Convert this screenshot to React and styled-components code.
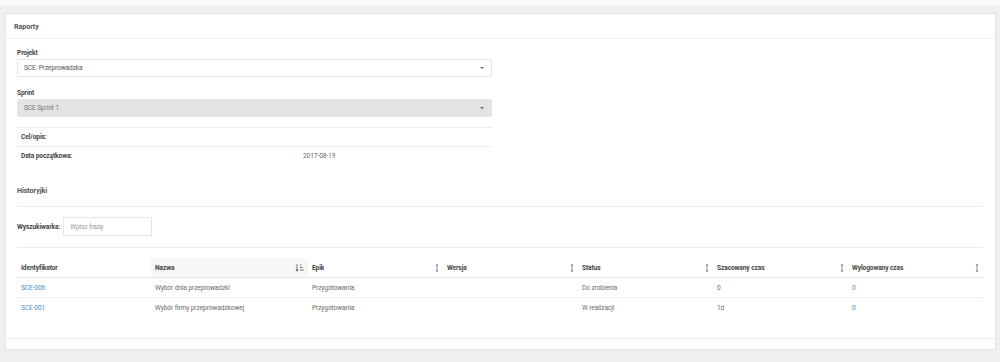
import React from 'react';
import styled, { createGlobalStyle } from 'styled-components';

const GlobalStyle = createGlobalStyle`
  body {
    margin: 0;
    background: #efefef;
    font-family: Roboto, "Liberation Sans", sans-serif;
    font-size: 6.6px;
    letter-spacing: -0.1px;
    color: #6a6a6a;
  }
`

const TopStrip = styled.div`
  height: 6px;
  background: #f8f8f8;
`

const Page = styled.div`
  padding: 7px 4px 13px 5px;
`

const Panel = styled.div`
  background: #fff;
  border: 1px solid #e4e4e4;
  border-top-color: #e0e2e4;
`

const PanelHeader = styled.div`
  height: 24px;
  display: flex;
  align-items: center;
  padding-left: 8px;
  border-bottom: 1px solid #eceef0;
  font-weight: 700;
  font-size: 7.2px;
  color: #555;
`

const PanelBody = styled.div`
  padding: 8px 12px 21px 11px;
`

const PanelFooter = styled.div`
  height: 10px;
  border-top: 1px solid #ececec;
`

const Narrow = styled.div`
  width: 475px;
`

const Label = styled.div`
  font-weight: 700;
  color: #444;
  height: 12px;
  line-height: 12px;
`

const SelectBox = styled.div`
  height: 18px;
  box-sizing: border-box;
  border: 1px solid #e6e6e6;
  border-radius: 2px;
  display: flex;
  align-items: center;
  justify-content: space-between;
  padding: 0 7px 0 6px;
  margin-bottom: 10px;
  background: ${p => (p.disabled ? '#e3e3e3' : '#fff')};
  color: ${p => (p.disabled ? '#777' : '#555')};
`

const Caret = styled.span`
  width: 0;
  height: 0;
  border-left: 2.5px solid transparent;
  border-right: 2.5px solid transparent;
  border-top: 2.5px solid #666;
`

const InfoTable = styled.div`
  border-top: 1px solid #ededed;
  margin-top: 8px;
`

const InfoRow = styled.div`
  display: grid;
  grid-template-columns: 282px 1fr;
  height: 18px;
  align-items: center;
  border-bottom: ${p => (p.last ? 'none' : '1px solid #ededed')};
  padding-left: 4px;
`

const InfoKey = styled.span`
  font-weight: 700;
  color: #444;
`

const SectionTitle = styled.div`
  margin-top: 21px;
  font-weight: 700;
  font-size: 7.2px;
  color: #555;
  padding-bottom: 11px;
  border-bottom: 1px solid #ececec;
`

const SearchRow = styled.div`
  display: flex;
  align-items: center;
  gap: 3px;
  padding: 10px 0 11px;
  border-bottom: 1px solid #ececec;
`

const SearchInput = styled.div`
  width: 89px;
  height: 19px;
  box-sizing: border-box;
  border: 1px solid #e6e6e6;
  display: flex;
  align-items: center;
  padding-left: 6px;
  color: #999;
`

const Table = styled.div`
  margin-top: 10px;
  display: grid;
  grid-template-columns: 134px 157px 135px 135px 135px 135px 135px;
`

const HeadCell = styled.div`
  height: 19px;
  display: flex;
  align-items: center;
  justify-content: space-between;
  padding: 0 4px;
  font-weight: 700;
  color: #444;
  border-bottom: 1px solid #e6e6e6;
  background: ${p => (p.sorted ? '#f7f7f7' : 'transparent')};
`

const Cell = styled.div`
  height: 19px;
  display: flex;
  align-items: center;
  padding: 0 4px;
  border-bottom: ${p => (p.last ? 'none' : '1px solid #efefef')};
  color: ${p => (p.link ? '#4a8fc8' : '#6a6a6a')};
`

const SortIcon = () => (
  <svg width="4" height="8" viewBox="0 0 4 8">
    <path d="M2 0.5 V7.5" stroke="#777" strokeWidth="0.8" />
    <path d="M0.5 1.5 L2 0 L3.5 1.5 Z M0.5 6.5 L2 8 L3.5 6.5 Z" fill="#777" />
  </svg>
)

const SortedIcon = () => (
  <svg width="9" height="8" viewBox="0 0 9 8">
    <path d="M2 0 V6.5" stroke="#666" strokeWidth="0.9" />
    <path d="M0.3 5.5 L2 7.8 L3.7 5.5 Z" fill="#666" />
    <path d="M5 1 H6.5 M5 3.5 H7.5 M5 6 H8.7" stroke="#666" strokeWidth="1" />
  </svg>
)

const columns = [
  { title: 'Identyfikator', sort: null, link: true },
  { title: 'Nazwa', sort: 'asc' },
  { title: 'Epik', sort: 'none' },
  { title: 'Wersja', sort: 'none' },
  { title: 'Status', sort: 'none' },
  { title: 'Szacowany czas', sort: 'none' },
  { title: 'Wylogowany czas', sort: 'none', link: true },
]

const rows = [
  ['SCE-006', 'Wybór dnia przeprowadzki', 'Przygotowania', '', 'Do zrobienia', '0', '0'],
  ['SCE-001', 'Wybór firmy przeprowadzkowej', 'Przygotowania', '', 'W realizacji', '1d', '0'],
]

export default function App() {
  return (
    <>
      <GlobalStyle />
      <TopStrip />
      <Page>
        <Panel>
          <PanelHeader>Raporty</PanelHeader>
          <PanelBody>
            <Narrow>
              <Label>Projekt</Label>
              <SelectBox>
                SCE: Przeprowadzka
                <Caret />
              </SelectBox>
              <Label>Sprint</Label>
              <SelectBox disabled>
                SCE Sprint 1
                <Caret />
              </SelectBox>
              <InfoTable>
                <InfoRow>
                  <InfoKey>Cel/opis:</InfoKey>
                  <span />
                </InfoRow>
                <InfoRow last>
                  <InfoKey>Data początkowa:</InfoKey>
                  <span>2017-08-19</span>
                </InfoRow>
              </InfoTable>
            </Narrow>
            <SectionTitle>Historyjki</SectionTitle>
            <SearchRow>
              <InfoKey>Wyszukiwarka:</InfoKey>
              <SearchInput>Wpisz frazę</SearchInput>
            </SearchRow>
            <Table>
              {columns.map(c => (
                <HeadCell key={c.title} sorted={c.sort === 'asc'}>
                  {c.title}
                  {c.sort === 'asc' && <SortedIcon />}
                  {c.sort === 'none' && <SortIcon />}
                </HeadCell>
              ))}
              {rows.map((r, i) =>
                r.map((v, j) => (
                  <Cell key={i + '-' + j} link={columns[j].link} last={i === rows.length - 1}>
                    {v}
                  </Cell>
                ))
              )}
            </Table>
          </PanelBody>
          <PanelFooter />
        </Panel>
      </Page>
    </>
  )
}
